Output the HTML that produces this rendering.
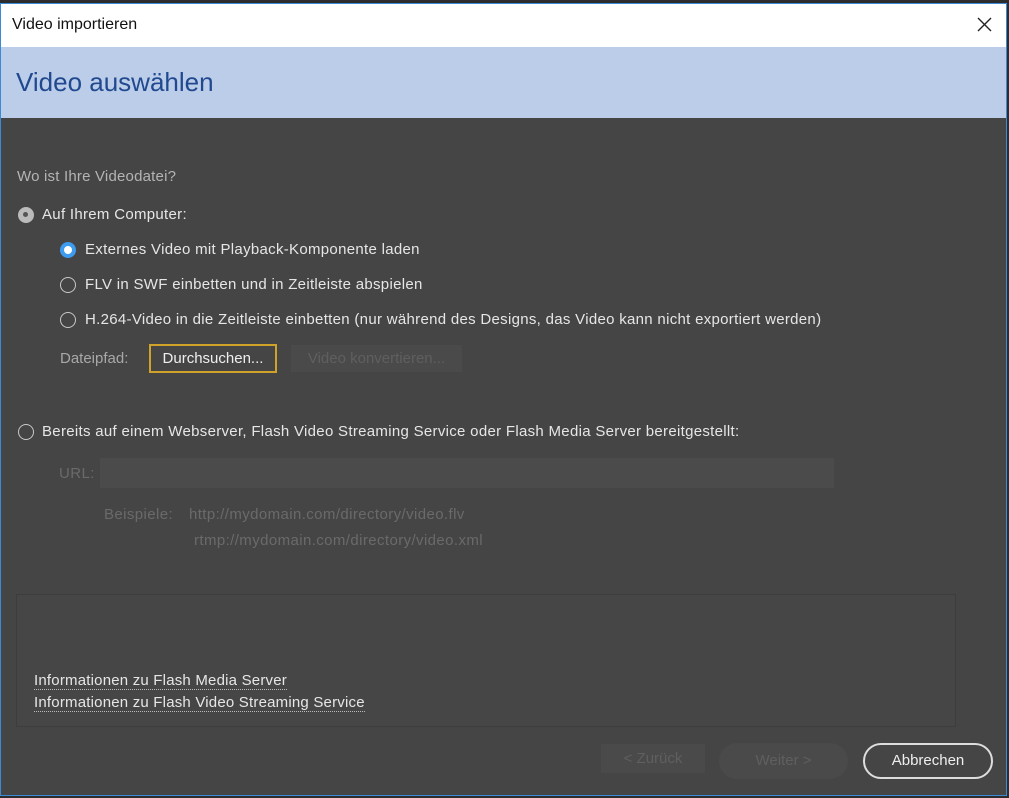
<!DOCTYPE html>
<html><head><meta charset="utf-8"><style>
*{margin:0;padding:0;box-sizing:border-box}
body{width:1009px;height:798px;background:#2d2d2d;font-family:"Liberation Sans",sans-serif;position:relative;overflow:hidden}
.win{position:absolute;left:0;top:3px;width:1007px;height:793px;border:1px solid #3b8ad6;background:#454545;overflow:hidden}
.t{position:absolute;white-space:nowrap}
.title{left:0;top:0;width:100%;height:43px;background:#fff}
.head{left:0;top:43px;width:100%;height:71px;background:#bccde9}
.r{position:absolute;width:16px;height:16px;border-radius:50%;border:1.5px solid #c8c8c8}
.lbl{color:#e6e6e6;font-size:15px;letter-spacing:0.3px}
.dim{color:#6a6a6a;font-size:15px;letter-spacing:0.4px}
.lnk{color:#e6e6e6;font-size:15px;letter-spacing:0.2px;border-bottom:1px dotted #bbb;line-height:17px}
</style></head><body>
<div class="win">
 <div class="t title"></div>
 <div class="t" style="left:11px;top:12px;font-size:16px;color:#111">Video importieren</div>
 <svg class="t" style="left:976px;top:13px" width="15" height="15"><path d="M1 1L14 14M14 1L1 14" stroke="#222" stroke-width="1.4"/></svg>
 <div class="t head"></div>
 <div class="t" style="left:15px;top:63px;font-size:26px;color:#20498f">Video auswählen</div>

 <div class="t" style="left:16px;top:164px;font-size:15px;letter-spacing:0.2px;color:#b4b4b4">Wo ist Ihre Videodatei?</div>
 <div class="r" style="left:17px;top:203px;background:#bbb;border-color:#bbb"><div style="position:absolute;left:4px;top:4px;width:5px;height:5px;border-radius:50%;background:#555"></div></div>
 <div class="t lbl" style="left:41px;top:202px">Auf Ihrem Computer:</div>

 <div class="r" style="left:59px;top:238px;border:4.5px solid #3d9bf0;background:#fff"></div>
 <div class="t lbl" style="left:84px;top:237px">Externes Video mit Playback-Komponente laden</div>
 <div class="r" style="left:59px;top:273px"></div>
 <div class="t lbl" style="left:84px;top:272px">FLV in SWF einbetten und in Zeitleiste abspielen</div>
 <div class="r" style="left:59px;top:308px"></div>
 <div class="t lbl" style="left:84px;top:307px">H.264-Video in die Zeitleiste einbetten (nur während des Designs, das Video kann nicht exportiert werden)</div>

 <div class="t" style="left:59px;top:346px;font-size:15px;color:#a8a8a8">Dateipfad:</div>
 <div class="t" style="left:148px;top:340px;width:128px;height:29px;border:2px solid #d1a22a;color:#eee;font-size:15px;text-align:center;line-height:25px">Durchsuchen...</div>
 <div class="t" style="left:290px;top:341px;width:171px;height:27px;background:#4a4a4a;color:#5f5f5f;font-size:15px;text-align:center;line-height:27px">Video konvertieren...</div>

 <div class="r" style="left:17px;top:420px"></div>
 <div class="t lbl" style="left:41px;top:419px">Bereits auf einem Webserver, Flash Video Streaming Service oder Flash Media Server bereitgestellt:</div>
 <div class="t dim" style="left:58px;top:461px">URL:</div>
 <div class="t" style="left:99px;top:454px;width:734px;height:30px;background:#4b4b4b"></div>
 <div class="t dim" style="left:103px;top:502px">Beispiele:</div>
 <div class="t dim" style="left:188px;top:502px">http://mydomain.com/directory/video.flv</div>
 <div class="t dim" style="left:193px;top:528px">rtmp://mydomain.com/directory/video.xml</div>

 <div class="t" style="left:15px;top:590px;width:940px;height:133px;border:1px solid #3d3d3d;background:#464646"></div>
 <div class="t lnk" style="left:33px;top:668px">Informationen zu Flash Media Server</div>
 <div class="t lnk" style="left:33px;top:690px">Informationen zu Flash Video Streaming Service</div>

 <div class="t" style="left:600px;top:740px;width:104px;height:29px;background:#4a4a4a;color:#5f5f5f;font-size:15px;text-align:center;line-height:29px">&lt; Zurück</div>
 <div class="t" style="left:718px;top:739px;width:129px;height:36px;border-radius:18px;background:#4a4a4a;color:#5f5f5f;font-size:15px;text-align:center;line-height:36px">Weiter &gt;</div>
 <div class="t" style="left:862px;top:739px;width:130px;height:36px;border-radius:18px;border:2px solid #ddd;color:#eee;font-size:15px;text-align:center;line-height:32px">Abbrechen</div>
</div>
</body></html>
